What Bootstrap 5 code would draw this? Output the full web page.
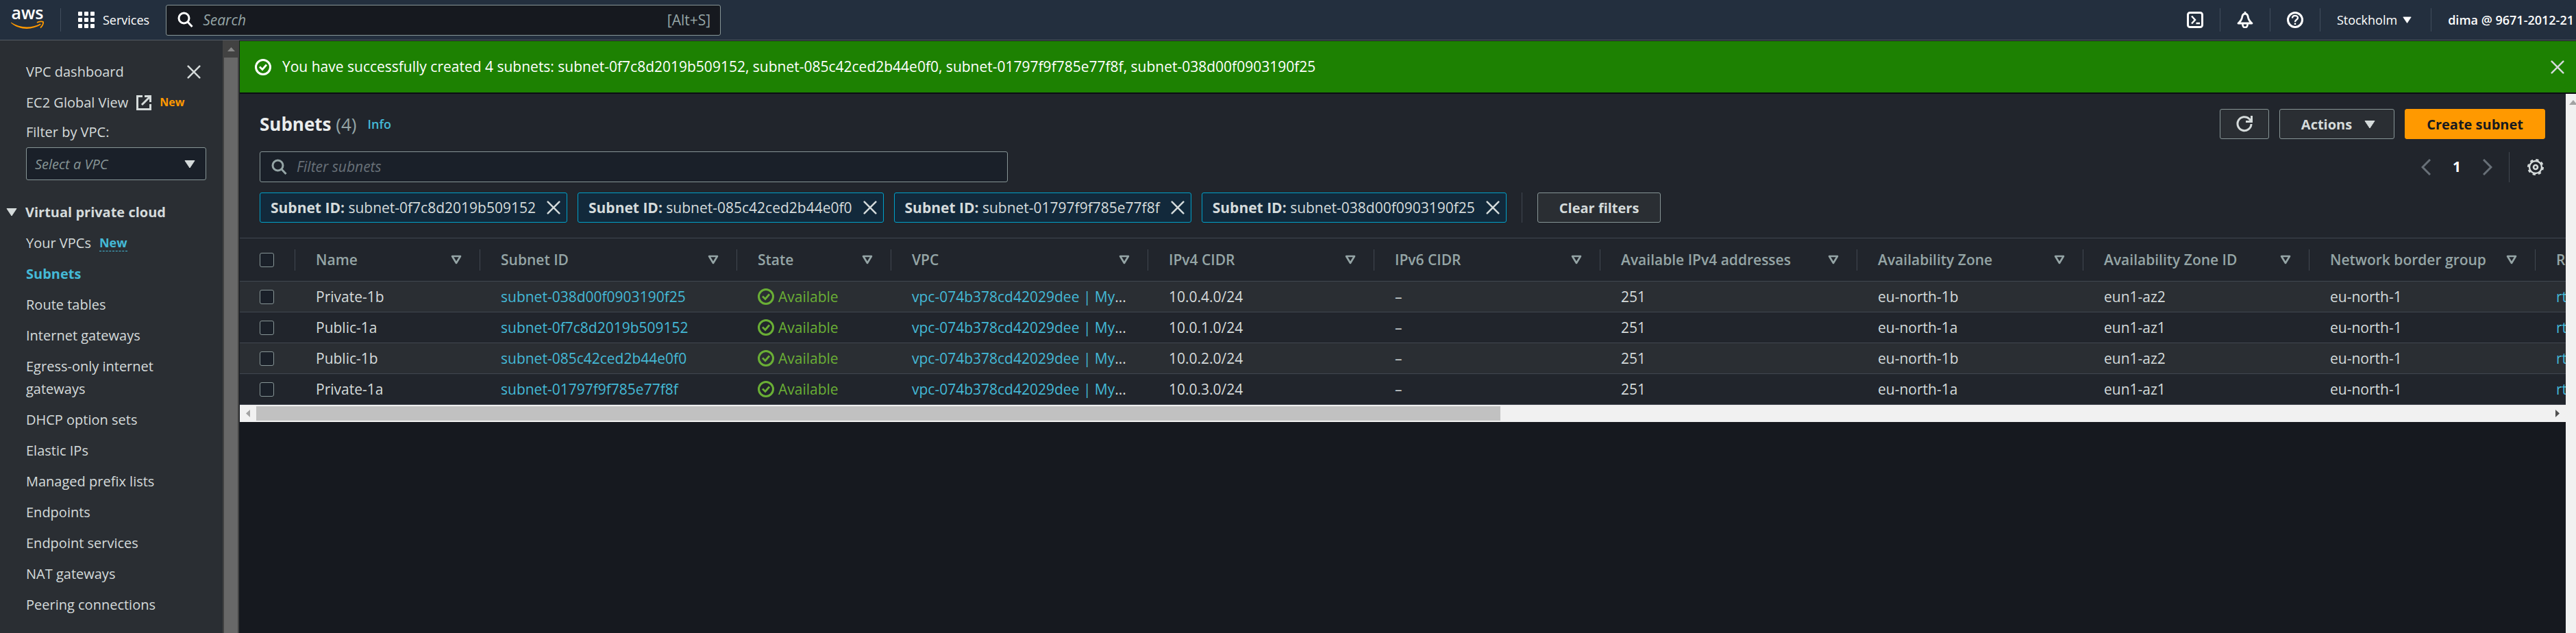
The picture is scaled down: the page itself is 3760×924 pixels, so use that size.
<!DOCTYPE html>
<html lang="en" data-bs-theme="dark">
<head>
<meta charset="utf-8">
<meta name="viewport" content="width=device-width, initial-scale=1">
<title>Subnets | VPC Console</title>
<link href="https://cdn.jsdelivr.net/npm/bootstrap@5.3.0/dist/css/bootstrap.min.css" rel="stylesheet">
<style>
:root{--ink:#d5dbdb;--muted:#95a5a6;--link:#44b9d6;--line:#414750;--panel:#21252c;--field:#1a2029}
body{font-family:"Open Sans","Noto Sans",sans-serif;font-size:21px;line-height:33px;color:var(--ink);background:#16191f;overflow:hidden}
svg{display:block;flex:none;fill:none;stroke:currentColor;stroke-width:2}
a{color:var(--link);text-decoration:none}
button{font-family:inherit}
.plain{background:none;border:0;padding:0;color:inherit}
.topbar{height:59px;background:#232f3e;border-bottom:1px solid #545b64;font-size:18px;font-weight:600;color:#fff;padding-right:3px}
.topbar a{color:#fff}
.topbar .apps{margin-left:25px}
.rule{width:1px;height:34px;background:#414d5c;flex:none}
.field{background:var(--field);border:1px solid #879596;border-radius:3px;height:45px;padding:0 14px 0 16px;gap:13px;color:var(--muted);font-weight:400}
.field input{background:none;border:0;outline:0;padding:0;flex:1;min-width:0;color:var(--ink);font-style:italic;font-size:21px}
.field input::placeholder{color:#687078;opacity:1}
.navsearch{width:810px;background:#16191f;font-size:21px}
.navsearch input::placeholder{color:var(--muted)}
.shell{height:calc(100vh - 59px)}
.side{width:325px;background:#2a2e33;padding:29px 24px 0 38px;overflow:hidden;font-size:20px}
.side a{color:var(--ink)}
.side li,.side .first,.side .group{margin-bottom:12px}
.side a.here{color:var(--link);font-weight:700}
.side .tag{color:var(--link);font-size:18px;line-height:24px;font-weight:700;border-bottom:1px dashed var(--link)}
.side .global{gap:12px;margin-bottom:10px}
.side .fresh{color:#f90;font-size:16px}
.side label{margin-bottom:6px}
.vpcselect{display:block;appearance:none;width:100%;height:48px;background:var(--field);border:1px solid #879596;border-radius:3px;padding:0 12px;color:#879596;font-style:italic}
.pick{position:relative;margin-bottom:30px}
.pick svg{position:absolute;right:16px;top:18px;pointer-events:none}
.group{margin-left:-29px;gap:12px;font-weight:700}
.vbar{width:25px;background:#424242;border-right:1px solid #16191f;flex:none}
.vbar .cap{height:25px}
.vbar .thumb{background:#686868;margin:0 2px;flex:1}
.flash{height:77px;margin-top:1px;background:#1d8102;border-bottom:2px solid #0b0e12;color:#fff;padding:0 17px 0 22px}
.flash button{color:var(--ink)}
.pane{background:var(--panel)}
.pane-head{padding:22px 30px 22px 29px}
.title-row{margin-bottom:18px}
.find-row{margin-bottom:15px}
.pane h1{font-size:26px;line-height:44px;font-weight:700;color:#eaeded}
.pane h1 span{font-weight:400;color:var(--muted)}
.info{font-size:18px;font-weight:600}
.acts,.chips{gap:15px}
.abtn{height:44px;border:1px solid #879596;border-radius:3px;background:#2a2e33;color:var(--ink);font-size:20px;font-weight:700;padding:0 31px}
.abtn svg{margin:auto}
.abtn.go{background:#f90;border-color:#f90;color:#16191f}
.abtn.ico{padding:0 23px}
.abtn.drop{gap:18px;padding:0 27px 0 31px}
.filter{width:1092px}
.chip{height:44px;border:1px solid #00a1c9;border-radius:3px;background:#12293b;padding:0 9px 0 15px;gap:16px}
.pager{color:#687078}
.pager b{color:#fff;margin:0 32px}
.pager .rule,.chips .rule{height:44px;background:var(--line)}
.chips .rule{margin:0 7px}
.gear{color:var(--ink);margin:0 2px 0 26px}
.grid-view{overflow:hidden}
.grid-view table{table-layout:fixed;width:5400px;border-collapse:separate;border-spacing:0}
.grid-view th{height:64px;border:solid var(--line);border-width:1px 0;padding:0;color:var(--muted);font-weight:600}
.grid-view th>div{height:31px;border-right:1px solid var(--line);padding:0 26px 0 30px}
.grid-view td{height:45px;border-bottom:1px solid var(--line);padding:0 30px;white-space:nowrap;line-height:33px}
.grid-view tbody tr:nth-child(odd){background:#2a2e33}
.grid-view td.tick,.grid-view th>div.tick{padding:0 0 0 29px}
.grid-view input{appearance:none;display:block;width:21px;height:21px;margin:0;border:1px solid #879596;border-radius:3px;background:var(--field)}
.ok{color:#6aaf35;gap:6px}
.hbar{height:25px;background:#f1f1f1;padding:2px 0}
.hbar .thumb{background:#c1c1c1;width:53.5%}
.hbar .cap{width:24px}
.rbar{width:15px;background:#f1f1f1;overflow:hidden;flex:none}
</style>
</head>
<body>
<svg width="0" height="0" class="position-absolute" aria-hidden="true">
<symbol id="lens" viewBox="0 0 24 24"><circle cx="9.500" cy="9.500" r="7.500" stroke-width="3"/><path d="M15 15l6.500 7" stroke-width="3"/></symbol>
<symbol id="cross" viewBox="0 0 24 24"><path d="M2 2l20 20M22 2L2 22" stroke-width="3" stroke-linecap="round"/></symbol>
<symbol id="down" viewBox="0 0 16 12"><path d="M1 1h14L8 11.500z" fill="currentColor" stroke-width="1" stroke-linejoin="round"/></symbol>
<symbol id="sort" viewBox="0 0 16 14"><path d="M2 2h12L8 12z" stroke-width="2.600" stroke-linejoin="round"/></symbol>
<symbol id="done" viewBox="0 0 24 24"><circle cx="12" cy="12" r="10.500" stroke-width="3"/><path d="M7 11.500l4 4 6-7" stroke-width="2.800"/></symbol>
</svg>

<header class="topbar d-flex align-items-center">
  <a href="#" class="d-block ms-3" aria-label="AWS home">
    <svg width="48" height="58" viewBox="0 0 48 58" stroke="none">
      <text x="24" y="28" text-anchor="middle" font-family="Open Sans" font-weight="600" font-size="25" fill="#fff" stroke="none">aws</text>
      <path d="M0 32.500C13 41 29 42 43 34.500l.8 1.600C30 44.500 12 44 0 33.500z" fill="#f90" stroke="none"/>
      <path d="M38 33c3-2 8-2 9-1 .5 2-1 6-4 8.500" stroke="#f90" stroke-width="1.800"/>
    </svg>
  </a>
  <i class="rule ms-4"></i>
  <button class="plain apps d-flex align-items-center">
    <svg width="24" height="24" viewBox="0 0 24 24"><g fill="#fff" stroke="none"><rect width="6" height="6" rx="1"/><rect x="9" width="6" height="6" rx="1"/><rect x="18" width="6" height="6" rx="1"/><rect y="9" width="6" height="6" rx="1"/><rect x="9" y="9" width="6" height="6" rx="1"/><rect x="18" y="9" width="6" height="6" rx="1"/><rect y="18" width="6" height="6" rx="1"/><rect x="9" y="18" width="6" height="6" rx="1"/><rect x="18" y="18" width="6" height="6" rx="1"/></g></svg>
    <span class="ps-2 ms-1">Services</span>
  </button>
  <label class="field navsearch d-flex align-items-center ms-4">
    <svg width="24" height="24" class="text-white"><use href="#lens"/></svg>
    <input type="search" placeholder="Search" aria-label="Search"><span>[Alt+S]</span>
  </label>
  <div class="d-flex align-items-center ms-auto gap-4 text-nowrap">
    <button class="plain" aria-label="CloudShell"><svg width="24" height="24" viewBox="0 0 24 24"><rect x="1.500" y="1.500" width="21" height="21" rx="3" stroke-width="3"/><path d="M7 6.500l5 5.500-5 5.500M13.500 17h5.500" stroke-width="2.500"/></svg></button>
    <i class="rule"></i>
    <button class="plain" aria-label="Notifications"><svg width="24" height="24" viewBox="0 0 24 24"><path d="M12 0v3M2 17h20c-3.500-3-5-5.500-5.500-8.500C16 5 14.500 3 12 3S8 5 7.500 8.500C7 11.500 5.500 14 2 17z" stroke-width="2.800" stroke-linejoin="round"/><path d="M8.500 18v1.500a3.500 3.500 0 0 0 7 0V18" stroke-width="2.600"/></svg></button>
    <i class="rule"></i>
    <button class="plain" aria-label="Help"><svg width="24" height="24" viewBox="0 0 24 24"><circle cx="12" cy="12" r="10.500" stroke-width="3"/><path d="M8 9.500C8 4.500 16 5 16 9c0 3-4 2.500-4 6M12 16.500v2.500" stroke-width="2.400"/></svg></button>
    <i class="rule"></i>
    <button class="plain d-flex align-items-center gap-2">Stockholm <svg width="13" height="12"><use href="#down"/></svg></button>
    <i class="rule ms-1"></i>
    <a href="#">dima @ 9671-2012-21</a>
  </div>
</header>

<div class="shell d-flex">
  <nav class="side flex-shrink-0" aria-label="VPC">
    <div class="first d-flex justify-content-between align-items-center"><a href="#">VPC dashboard</a><button class="plain me-2" aria-label="Close"><svg width="20" height="20"><use href="#cross"/></svg></button></div>
    <div class="global d-flex align-items-center"><a href="#" class="d-flex align-items-center global mb-0">EC2 Global View <svg width="22" height="22" viewBox="0 0 22 22"><path d="M9 1.500H1.500v19h19V13M12 1.500h8.500V10M20 2L8 14" stroke-width="3"/></svg></a><b class="fresh">New</b></div>
    <label for="vpc" class="d-block">Filter by VPC:</label>
    <div class="pick"><select id="vpc" class="vpcselect"><option>Select a VPC</option></select><svg width="16" height="13"><use href="#down"/></svg></div>
    <button class="plain group d-flex align-items-center"><svg width="16" height="13"><use href="#down"/></svg>Virtual private cloud</button>
    <ul class="list-unstyled m-0">
      <li class="d-flex align-items-center gap-2"><a href="#">Your VPCs</a><span class="tag ms-1">New</span></li>
      <li><a href="#" class="here">Subnets</a></li>
      <li><a href="#">Route tables</a></li>
      <li><a href="#">Internet gateways</a></li>
      <li><a href="#">Egress-only internet gateways</a></li>
      <li><a href="#">DHCP option sets</a></li>
      <li><a href="#">Elastic IPs</a></li>
      <li><a href="#">Managed prefix lists</a></li>
      <li><a href="#">Endpoints</a></li>
      <li><a href="#">Endpoint services</a></li>
      <li><a href="#">NAT gateways</a></li>
      <li><a href="#">Peering connections</a></li>
    </ul>
  </nav>
  <div class="vbar d-flex flex-column"><div class="cap d-flex align-items-center justify-content-center"><svg width="11" height="6" viewBox="0 0 11 6"><path d="M0 6L5.500 0 11 6z" fill="#868686" stroke="none"/></svg></div><div class="thumb"></div></div>

  <div class="d-flex flex-column flex-grow-1 overflow-hidden">
    <div class="flash d-flex align-items-center flex-shrink-0" role="status">
      <svg width="24" height="24" class="me-3"><use href="#done"/></svg>
      <span>You have successfully created 4 subnets: subnet-0f7c8d2019b509152, subnet-085c42ced2b44e0f0, subnet-01797f9f785e77f8f, subnet-038d00f0903190f25</span>
      <button class="plain ms-auto" aria-label="Dismiss"><svg width="20" height="20"><use href="#cross"/></svg></button>
    </div>
    <div class="d-flex flex-grow-1 overflow-hidden">
      <main class="flex-grow-1 overflow-hidden">
        <section class="pane">
          <div class="pane-head">
            <div class="title-row d-flex align-items-center">
              <h1 class="m-0">Subnets <span>(4)</span></h1><a href="#" class="info ms-3">Info</a>
              <div class="acts d-flex ms-auto">
                <button class="abtn ico" aria-label="Refresh"><svg width="24" height="24" viewBox="0 0 24 24"><path d="M22 12a10 10 0 1 1-3-7.500l3 3M22.500 0v8.500H14" stroke-width="3"/></svg></button>
                <button class="abtn drop d-flex align-items-center">Actions <svg width="16" height="13"><use href="#down"/></svg></button>
                <button class="abtn go">Create subnet</button>
              </div>
            </div>
            <div class="find-row d-flex align-items-center">
              <label class="field filter d-flex align-items-center"><svg width="24" height="24"><use href="#lens"/></svg><input type="search" placeholder="Filter subnets" aria-label="Filter subnets"></label>
              <div class="pager d-flex align-items-center ms-auto">
                <button class="plain" aria-label="Previous page"><svg width="14" height="24" viewBox="0 0 14 24"><path d="M13 1L2 12l11 11" stroke-width="3"/></svg></button>
                <b>1</b>
                <button class="plain" aria-label="Next page"><svg width="14" height="24" viewBox="0 0 14 24"><path d="M1 1l11 11L1 23" stroke-width="3"/></svg></button>
                <i class="rule ms-4"></i>
                <button class="plain gear" aria-label="Preferences"><svg width="24" height="24" viewBox="0 0 24 24"><circle cx="12" cy="12" r="9" stroke-width="2.400"/><circle cx="12" cy="12" r="10.800" stroke-width="2.400" stroke-dasharray="4.240 4.240"/><circle cx="12" cy="12" r="3" stroke-width="2.600"/></svg></button>
              </div>
            </div>
            <div class="chips d-flex align-items-center">
              <span class="chip d-flex align-items-center"><span><b>Subnet ID:</b> subnet-0f7c8d2019b509152</span><button class="plain" aria-label="Remove"><svg width="20" height="20"><use href="#cross"/></svg></button></span>
              <span class="chip d-flex align-items-center"><span><b>Subnet ID:</b> subnet-085c42ced2b44e0f0</span><button class="plain" aria-label="Remove"><svg width="20" height="20"><use href="#cross"/></svg></button></span>
              <span class="chip d-flex align-items-center"><span><b>Subnet ID:</b> subnet-01797f9f785e77f8f</span><button class="plain" aria-label="Remove"><svg width="20" height="20"><use href="#cross"/></svg></button></span>
              <span class="chip d-flex align-items-center"><span><b>Subnet ID:</b> subnet-038d00f0903190f25</span><button class="plain" aria-label="Remove"><svg width="20" height="20"><use href="#cross"/></svg></button></span>
              <i class="rule"></i>
              <button class="abtn">Clear filters</button>
            </div>
          </div>
          <div class="grid-view">
            <table>
              <colgroup><col style="width:81px"><col style="width:270px"><col style="width:375px"><col style="width:225px"><col style="width:375px"><col style="width:330px"><col style="width:330px"><col style="width:375px"><col style="width:330px"><col style="width:330px"><col style="width:330px"><col></colgroup>
              <thead><tr id="heads"><th><div class="tick d-flex align-items-center"><input type="checkbox" aria-label="Select all"></div></th></tr></thead>
              <tbody id="rows"></tbody>
            </table>
          </div>
          <div class="hbar d-flex">
            <div class="cap d-flex align-items-center justify-content-center"><svg width="6" height="11" viewBox="0 0 6 11"><path d="M6 0L0 5.500 6 11z" fill="#a3a3a3" stroke="none"/></svg></div>
            <div class="thumb"></div>
            <div class="cap ms-auto d-flex align-items-center justify-content-center"><svg width="6" height="11" viewBox="0 0 6 11"><path d="M0 0l6 5.500L0 11z" fill="#505050" stroke="none"/></svg></div>
          </div>
        </section>
      </main>
      <div class="rbar"><svg class="mt-2 ms-1" width="14" height="8" viewBox="0 0 14 8"><path d="M1 8l6-7 6 7z" fill="#a3a3a3" stroke="none"/></svg></div>
    </div>
  </div>
</div>
<script>
const heads = ["Name","Subnet ID","State","VPC","IPv4 CIDR","IPv6 CIDR","Available IPv4 addresses","Availability Zone","Availability Zone ID","Network border group","R"];
document.getElementById("heads").insertAdjacentHTML("beforeend", heads.map(h =>
  `<th><div class="d-flex align-items-center justify-content-between text-nowrap">${h}<svg width="16" height="14"><use href="#sort"/></svg></div></th>`).join(""));
const rows = [["Private-1b","subnet-038d00f0903190f25","4","b","2"],["Public-1a","subnet-0f7c8d2019b509152","1","a","1"],["Public-1b","subnet-085c42ced2b44e0f0","2","b","2"],["Private-1a","subnet-01797f9f785e77f8f","3","a","1"]];
document.getElementById("rows").innerHTML = rows.map(([n,id,net,z,az]) =>
  `<tr><td class="tick"><input type="checkbox" aria-label="Select ${n}"></td><td>${n}</td><td><a href="#">${id}</a></td>
  <td><span class="ok d-flex align-items-center"><svg width="24" height="24"><use href="#done"/></svg>Available</span></td>
  <td><a href="#">vpc-074b378cd42029dee | My</a>...</td><td>10.0.${net}.0/24</td><td>–</td><td>251</td>
  <td>eu-north-1${z}</td><td>eun1-az${az}</td><td>eu-north-1</td><td><a href="#">rt</a></td></tr>`).join("");
</script>
<script src="https://cdn.jsdelivr.net/npm/bootstrap@5.3.0/dist/js/bootstrap.bundle.min.js"></script>
</body>
</html>
